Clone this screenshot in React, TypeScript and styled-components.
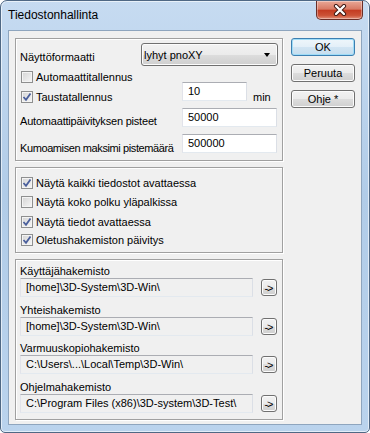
import { FC } from "react";
import styled, { createGlobalStyle } from "styled-components";

const GlobalStyle = createGlobalStyle`
	html, body {
		margin: 0;
		padding: 0;
		background: #ffffff;
	}
	body {
		font-family: "Liberation Sans", Arial, sans-serif;
		font-size: 11px;
		color: #000;
	}
`;

const Window = styled.div`
	box-sizing: border-box;
	width: 370px;
	height: 433px;
	display: flex;
	flex-direction: column;
	padding: 0 7px 7px 7px;
	border: 1px solid #4f6884;
	border-radius: 7px 7px 5px 5px;
	background: linear-gradient(180deg, #c6dbf1 0%, #b1cce8 45%, #bad3ed 100%);
	box-shadow: inset 0 0 0 1px rgba(255, 255, 255, 0.6);
`;

const TitleBar = styled.div`
	height: 29px;
	display: flex;
	justify-content: space-between;
	align-items: flex-start;
`;

const Title = styled.span`
	font-size: 12px;
	line-height: 28px;
	color: #000;
`;

const CloseButton = styled.div`
	box-sizing: border-box;
	width: 47px;
	height: 19px;
	margin-right: -1px;
	display: flex;
	align-items: center;
	justify-content: center;
	border: 1px solid #6a2e27;
	border-top: none;
	border-radius: 0 0 5px 5px;
	background: linear-gradient(
		180deg,
		#e9a897 0%,
		#d87a64 45%,
		#c43c22 52%,
		#cc5236 80%,
		#e2907a 100%
	);
	box-shadow: inset 0 0 0 1px rgba(255, 255, 255, 0.35);
`;

const Client = styled.div`
	flex: 1;
	box-sizing: border-box;
	display: flex;
	gap: 8px;
	padding: 7px 6px 0 6px;
	border: 1px solid #8ea5be;
	background: #f0f0f0;
`;

const LeftColumn = styled.div`
	width: 268px;
	display: flex;
	flex-direction: column;
	gap: 6px;
`;

const RightColumn = styled.div`
	width: 64px;
	display: flex;
	flex-direction: column;
	gap: 8px;
`;

const Group = styled.div<{ $height: number }>`
	box-sizing: border-box;
	height: ${props => props.$height}px;
	display: flex;
	flex-direction: column;
	padding: 0 3px 0 4px;
	border: 1px solid #a0a0a0;
	box-shadow: inset 1px 1px 0 #ffffff, 1px 1px 0 #ffffff;
`;

const Row = styled.div<{ $top: number; $height: number }>`
	display: flex;
	align-items: flex-start;
	margin-top: ${props => props.$top}px;
	height: ${props => props.$height}px;
`;

const Label = styled.span<{ $width: number; $top: number; $tight?: number }>`
	width: ${props => props.$width}px;
	flex-shrink: 0;
	margin-top: ${props => props.$top}px;
	line-height: 14px;
	white-space: nowrap;
	letter-spacing: ${props => props.$tight ?? 0}px;
`;

const Unit = styled.span`
	margin-left: 6px;
	margin-top: 8px;
	line-height: 14px;
`;

const ComboBox = styled.div`
	box-sizing: border-box;
	width: 137px;
	height: 23px;
	display: flex;
	align-items: center;
	justify-content: space-between;
	padding: 0 7px 0 2px;
	border: 1px solid #707070;
	border-radius: 3px;
	background: linear-gradient(180deg, #f2f2f2 0%, #ebebeb 50%, #dddddd 50%, #cfcfcf 100%);
	box-shadow: inset 0 0 0 1px #fcfcfc;
`;

const ComboArrow = styled.span`
	width: 0;
	height: 0;
	border-left: 3.5px solid transparent;
	border-right: 3.5px solid transparent;
	border-top: 4px solid #000;
	margin-top: 1px;
`;

const TextBox = styled.div<{ $width: number; $readOnly?: boolean }>`
	box-sizing: border-box;
	width: ${props => props.$width}px;
	height: 19px;
	flex-shrink: 0;
	padding: 0 5px;
	line-height: 17px;
	white-space: nowrap;
	border: 1px solid;
	border-color: #abadb3 #dbdfe6 #e3e9ef #e2e3ea;
	background: ${props => (props.$readOnly ? "#f0f0f0" : "#ffffff")};
`;

const CheckRow = styled.div<{ $top: number }>`
	display: flex;
	align-items: center;
	gap: 3px;
	height: 14px;
	margin-top: ${props => props.$top}px;
	line-height: 14px;
	white-space: nowrap;
`;

const Box = styled.span`
	box-sizing: border-box;
	width: 12px;
	height: 12px;
	margin-left: 1px;
	display: flex;
	align-items: center;
	justify-content: center;
	border: 1px solid #8e8f8f;
	background: linear-gradient(135deg, #d4d4d4 0%, #f6f6f6 100%);
	box-shadow: inset 0 0 0 1px #f4f4f4;
`;

const PathLabel = styled.div<{ $top: number }>`
	margin-top: ${props => props.$top}px;
	line-height: 13px;
	height: 13px;
	white-space: nowrap;
`;

const PathRow = styled.div`
	display: flex;
	align-items: flex-start;
	gap: 8px;
`;

const BrowseButton = styled.div`
	box-sizing: border-box;
	width: 16px;
	height: 17px;
	margin-top: 1px;
	display: flex;
	align-items: center;
	justify-content: center;
	font-size: 11px;
	letter-spacing: -1px;
	padding-right: 1px;
	border: 1px solid #707070;
	border-radius: 3px;
	background: linear-gradient(180deg, #f2f2f2 0%, #ebebeb 50%, #dddddd 50%, #cfcfcf 100%);
	box-shadow: inset 0 0 0 1px #fcfcfc;
`;

const DialogButton = styled.div<{ $default?: boolean }>`
	box-sizing: border-box;
	width: 64px;
	height: 18px;
	display: flex;
	align-items: center;
	justify-content: center;
	border: 1px solid ${props => (props.$default ? "#3c7fb1" : "#707070")};
	border-radius: 3px;
	background: ${props =>
		props.$default
			? "linear-gradient(180deg, #eef6fb 0%, #e3eff8 50%, #d2e5f3 50%, #c6ddee 100%)"
			: "linear-gradient(180deg, #f2f2f2 0%, #ebebeb 50%, #dddddd 50%, #cfcfcf 100%)"};
	box-shadow: inset 0 0 0 1px ${props => (props.$default ? "#9fdcf7" : "#fcfcfc")};
`;

const Checkbox: FC<{ checked?: boolean; label: string; top: number }> = ({
	checked,
	label,
	top
}) => (
	<CheckRow $top={top}>
		<Box>
			{checked && (
				<svg width="10" height="10" viewBox="0 0 10 10">
					<path d="M1.5 5 L4 7.8 L8.5 1.5" fill="none" stroke="#4a5f9c" strokeWidth="1.8" />
				</svg>
			)}
		</Box>
		<span>{label}</span>
	</CheckRow>
);

const folders = [
	{ label: "Käyttäjähakemisto", path: "[home]\\3D-System\\3D-Win\\", top: 5 },
	{ label: "Yhteishakemisto", path: "[home]\\3D-System\\3D-Win\\", top: 7 },
	{ label: "Varmuuskopiohakemisto", path: "C:\\Users\\...\\Local\\Temp\\3D-Win\\", top: 6 },
	{ label: "Ohjelmahakemisto", path: "C:\\Program Files (x86)\\3D-system\\3D-Test\\", top: 7 }
];

const App: FC = () => (
	<>
		<GlobalStyle />
		<Window>
			<TitleBar>
				<Title>Tiedostonhallinta</Title>
				<CloseButton>
					<svg width="14" height="12" viewBox="0 0 14 12">
						<path d="M3 2 L11 10 M11 2 L3 10" stroke="#3b1510" strokeWidth="4.2" strokeLinecap="round" />
						<path d="M3 2 L11 10 M11 2 L3 10" stroke="#ffffff" strokeWidth="2.4" strokeLinecap="round" />
					</svg>
				</CloseButton>
			</TitleBar>

			<Client>
				<LeftColumn>
					<Group $height={123}>
						<Row $top={4} $height={23}>
							<Label $width={121} $top={7}>Näyttöformaatti</Label>
							<ComboBox>
								<span>lyhyt pnoXY</span>
								<ComboArrow />
							</ComboBox>
						</Row>
						<Checkbox label="Automaattitallennus" top={4} />
						<Row $top={-2} $height={19}>
							<Label $width={162} $top={8}>
								<Checkbox checked label="Taustatallennus" top={0} />
							</Label>
							<TextBox $width={65}>10</TextBox>
							<Unit>min</Unit>
						</Row>
						<Row $top={7} $height={19}>
							<Label $width={162} $top={6} $tight={-0.2}>
								Automaattipäivityksen pisteet
							</Label>
							<TextBox $width={95}>50000</TextBox>
						</Row>
						<Row $top={7} $height={19}>
							<Label $width={162} $top={7} $tight={-0.4}>
								Kumoamisen maksimi pistemäärä
							</Label>
							<TextBox $width={95}>500000</TextBox>
						</Row>
					</Group>

					<Group $height={86}>
						<Checkbox checked label="Näytä kaikki tiedostot avattaessa" top={8} />
						<Checkbox label="Näytä koko polku yläpalkissa" top={5} />
						<Checkbox checked label="Näytä tiedot avattaessa" top={6} />
						<Checkbox checked label="Oletushakemiston päivitys" top={4} />
					</Group>

					<Group $height={161}>
						{folders.map(folder => (
							<div key={folder.label}>
								<PathLabel $top={folder.top}>{folder.label}</PathLabel>
								<PathRow>
									<TextBox $width={233} $readOnly>
										{folder.path}
									</TextBox>
									<BrowseButton>-&gt;</BrowseButton>
								</PathRow>
							</div>
						))}
					</Group>
				</LeftColumn>

				<RightColumn>
					<DialogButton $default>OK</DialogButton>
					<DialogButton>Peruuta</DialogButton>
					<DialogButton>Ohje *</DialogButton>
				</RightColumn>
			</Client>
		</Window>
	</>
);

export default App;
